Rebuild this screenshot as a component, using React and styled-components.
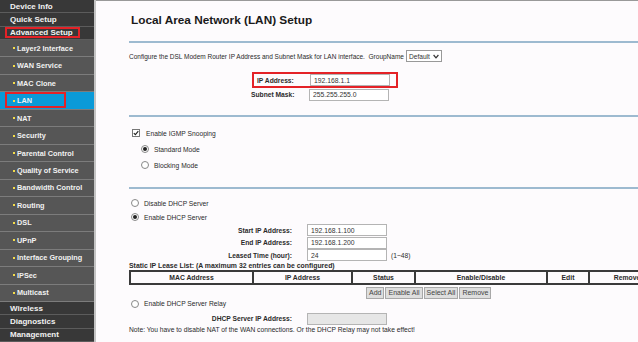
import styled, { createGlobalStyle } from "styled-components";

const GlobalStyle = createGlobalStyle`
  html, body {
    margin: 0;
    padding: 0;
    background: #fdfbfd;
  }
  body {
    font-family: "Liberation Sans", Arial, sans-serif;
    color: #2a2a2a;
  }
`;

const menu = [
  { label: "Device Info", top: true },
  { label: "Quick Setup", top: true },
  { label: "Advanced Setup", top: true, mark: 75 },
  { label: "Layer2 Interface" },
  { label: "WAN Service" },
  { label: "MAC Clone" },
  { label: "LAN", active: true, mark: 61 },
  { label: "NAT" },
  { label: "Security" },
  { label: "Parental Control" },
  { label: "Quality of Service" },
  { label: "Bandwidth Control" },
  { label: "Routing" },
  { label: "DSL" },
  { label: "UPnP" },
  { label: "Interface Grouping" },
  { label: "IPSec" },
  { label: "Multicast" },
  { label: "Wireless", top: true },
  { label: "Diagnostics", top: true },
  { label: "Management", top: true },
];

const columns = [
  { label: "MAC Address", width: 123 },
  { label: "IP Address", width: 99 },
  { label: "Status", width: 63 },
  { label: "Enable/Disable", width: 132 },
  { label: "Edit", width: 42 },
  { label: "Remove", width: 76 },
];

function CheckBox({ checked, children, top, indent }) {
  return (
    <Option $top={top} $indent={indent}>
      <Box>
        {checked && (
          <svg width="6" height="6" viewBox="0 0 6 6">
            <path d="M0.8 3.1 L2.4 4.7 L5.3 1.2" fill="none" stroke="#222" strokeWidth="1.1" />
          </svg>
        )}
      </Box>
      {children}
    </Option>
  );
}

function RadioButton({ checked, children, top, indent }) {
  return (
    <Option $top={top} $indent={indent}>
      <Round>{checked && <Dot />}</Round>
      {children}
    </Option>
  );
}

export default function App() {
  return (
    <>
      <GlobalStyle />
      <Page>
        <Sidebar>
          {menu.map((item) => (
            <MenuItem key={item.label} $top={item.top} $active={item.active}>
              {!item.top && <Bullet />}
              {item.label}
              {item.mark && <Mark style={{ width: item.mark }} />}
            </MenuItem>
          ))}
        </Sidebar>

        <Main>
          <Title>Local Area Network (LAN) Setup</Title>
          <Rule />

          <Description>
            Configure the DSL Modem Router IP Address and Subnet Mask for LAN
            interface.&nbsp; GroupName
            <Dropdown>
              Default
              <svg width="6" height="5" viewBox="0 0 6 5">
                <path d="M0.6 1 L3 3.8 L5.4 1" fill="none" stroke="#333" strokeWidth="1.2" />
              </svg>
            </Dropdown>
          </Description>

          <AddressBlock>
            <AddressRow $marked>
              <AddressLabel $marked>IP Address:</AddressLabel>
              <TextBox defaultValue="192.168.1.1" />
            </AddressRow>
            <AddressRow>
              <AddressLabel>Subnet Mask:</AddressLabel>
              <TextBox defaultValue="255.255.255.0" />
            </AddressRow>
          </AddressBlock>

          <Rule $gap={14} />

          <CheckBox checked top={11} indent={3}>
            Enable IGMP Snooping
          </CheckBox>
          <RadioButton checked top={6} indent={12}>
            Standard Mode
          </RadioButton>
          <RadioButton top={6} indent={12}>
            Blocking Mode
          </RadioButton>

          <Rule $gap={17} />

          <RadioButton top={9} indent={2}>
            Disable DHCP Server
          </RadioButton>
          <RadioButton checked top={4} indent={2}>
            Enable DHCP Server
          </RadioButton>

          <FieldList>
            <Field>
              <FieldLabel>Start IP Address:</FieldLabel>
              <TextBox defaultValue="192.168.1.100" />
            </Field>
            <Field>
              <FieldLabel>End IP Address:</FieldLabel>
              <TextBox defaultValue="192.168.1.200" />
            </Field>
            <Field>
              <FieldLabel>Leased Time (hour):</FieldLabel>
              <TextBox defaultValue="24" />
              <Hint>(1~48)</Hint>
            </Field>
          </FieldList>

          <ListTitle>
            Static IP Lease List: (A maximum 32 entries can be configured)
          </ListTitle>
          <LeaseTable>
            <colgroup>
              {columns.map((c) => (
                <col key={c.label} style={{ width: c.width }} />
              ))}
            </colgroup>
            <thead>
              <tr>
                {columns.map((c) => (
                  <HeadCell key={c.label}>{c.label}</HeadCell>
                ))}
              </tr>
            </thead>
          </LeaseTable>
          <ButtonRow>
            <Button>Add</Button>
            <Button>Enable All</Button>
            <Button>Select All</Button>
            <Button>Remove</Button>
          </ButtonRow>

          <RadioButton top={0} indent={2}>
            Enable DHCP Server Relay
          </RadioButton>
          <Field $top={4}>
            <FieldLabel>DHCP Server IP Address:</FieldLabel>
            <TextBox disabled />
          </Field>
          <Note>
            Note: You have to disable NAT of the WAN connections. Or the DHCP
            Relay may not take effect!
          </Note>
        </Main>
      </Page>
    </>
  );
}

const Page = styled.div`
  display: flex;
  width: 638px;
  height: 342px;
  overflow: hidden;
`;

const Sidebar = styled.nav`
  flex: 0 0 94px;
  display: flex;
  flex-direction: column;
  background: #555;
  border-right: 2px solid #c4c4c4;
`;

const MenuItem = styled.div`
  position: relative;
  box-sizing: border-box;
  display: flex;
  align-items: center;
  height: ${(p) => (p.$top ? "13.33px" : "17.47px")};
  padding-left: ${(p) => (p.$top ? "10px" : "13px")};
  background: ${(p) => (p.$active ? "#0a9ad8" : p.$top ? "#383838" : "#565656")};
  border-bottom: 1px solid ${(p) => (p.$top ? "#5c5c5c" : "#7c7c7c")};
  color: #f2f2f2;
  font-size: ${(p) => (p.$top ? "8px" : "7.3px")};
  font-weight: bold;
  white-space: nowrap;
`;

const Bullet = styled.span`
  width: 2px;
  height: 2px;
  margin-right: 2px;
  background: #f3dc4a;
`;

const Mark = styled.span`
  position: absolute;
  left: 5px;
  top: 0;
  bottom: 1px;
  box-sizing: border-box;
  border: 2px solid #e42227;
`;

const Main = styled.main`
  flex: 1;
  min-width: 0;
  box-sizing: border-box;
  padding-left: 33px;
  border-top: 1px solid #999;
  overflow: hidden;
  font-size: 6.7px;
`;

const Title = styled.h1`
  margin: 12px 0 14px 2px;
  font-size: 11.8px;
  line-height: 14px;
  font-weight: bold;
  color: #1a1a1a;
`;

const Rule = styled.div`
  margin-top: ${(p) => p.$gap || 0}px;
  border-top: 2px solid #9dbad0;
`;

const Description = styled.div`
  display: flex;
  align-items: center;
  height: 12px;
  margin-top: 7px;
  font-size: 6.5px;
  white-space: nowrap;
`;

const Dropdown = styled.span`
  box-sizing: border-box;
  display: inline-flex;
  align-items: center;
  justify-content: space-between;
  width: 36px;
  height: 12px;
  margin-left: 2px;
  padding: 0 2px 0 2px;
  border: 1px solid #999;
  background: #fff;
  font-size: 6.6px;
  color: #333;
`;

const AddressBlock = styled.div`
  display: flex;
  flex-direction: column;
  margin: 10px 0 0 122px;
`;

const AddressRow = styled.div`
  display: flex;
  align-items: center;
  box-sizing: border-box;
  width: ${(p) => (p.$marked ? "146px" : "auto")};
  height: ${(p) => (p.$marked ? "16px" : "13px")};
  border: ${(p) => (p.$marked ? "2px solid #e42227" : "none")};
  margin-left: ${(p) => (p.$marked ? "1px" : "0")};
`;

const AddressLabel = styled.span`
  width: ${(p) => (p.$marked ? "53px" : "58px")};
  padding-left: ${(p) => (p.$marked ? "3px" : "0")};
  font-weight: bold;
`;

const TextBox = styled.input`
  box-sizing: border-box;
  width: 80px;
  height: 12px;
  padding: 0 0 0 3px;
  border: 1px solid #b4b4b4;
  border-radius: 0;
  background: ${(p) => (p.disabled ? "#e6e6e6" : "#fff")};
  font-family: inherit;
  font-size: 6.8px;
  color: #333;
  outline: none;
`;

const Option = styled.div`
  display: flex;
  align-items: center;
  height: 10px;
  margin-top: ${(p) => p.$top}px;
  padding-left: ${(p) => p.$indent}px;
`;

const Box = styled.span`
  box-sizing: border-box;
  display: inline-flex;
  align-items: center;
  justify-content: center;
  width: 8px;
  height: 8px;
  margin-right: 6px;
  border: 1px solid #777;
  background: #fff;
`;

const Round = styled.span`
  box-sizing: border-box;
  display: inline-flex;
  align-items: center;
  justify-content: center;
  width: 8px;
  height: 8px;
  margin-right: 5px;
  border: 1px solid #888;
  border-radius: 50%;
  background: #fff;
`;

const Dot = styled.span`
  width: 4px;
  height: 4px;
  border-radius: 50%;
  background: #222;
`;

const FieldList = styled.div`
  display: flex;
  flex-direction: column;
  margin-top: 2px;
`;

const Field = styled.div`
  display: grid;
  grid-template-columns: 163px 80px auto;
  column-gap: 15px;
  align-items: center;
  height: 12.5px;
  margin-top: ${(p) => p.$top || 0}px;
`;

const FieldLabel = styled.span`
  text-align: right;
  font-weight: bold;
`;

const Hint = styled.span`
  margin-left: -11px;
`;

const ListTitle = styled.div`
  height: 8px;
  line-height: 8px;
  font-weight: bold;
  font-size: 6.9px;
  white-space: nowrap;
`;

const LeaseTable = styled.table`
  width: 535px;
  border-collapse: collapse;
  table-layout: fixed;
`;

const HeadCell = styled.th`
  height: 9px;
  padding: 1px 0;
  border: 2px solid #3a3a3a;
  font-size: 6.8px;
  font-weight: bold;
  text-align: center;
  white-space: nowrap;
  overflow: hidden;
`;

const ButtonRow = styled.div`
  display: flex;
  gap: 1px;
  margin: 2px 0 0 237px;
`;

const Button = styled.button`
  height: 12px;
  padding: 0 2px;
  border: 1px solid #a8a8a8;
  border-radius: 0;
  background: #dedede;
  font-family: inherit;
  font-size: 7px;
  color: #444;
`;

const Note = styled.div`
  height: 8px;
  line-height: 8px;
  margin-top: 1px;
  white-space: nowrap;
`;
